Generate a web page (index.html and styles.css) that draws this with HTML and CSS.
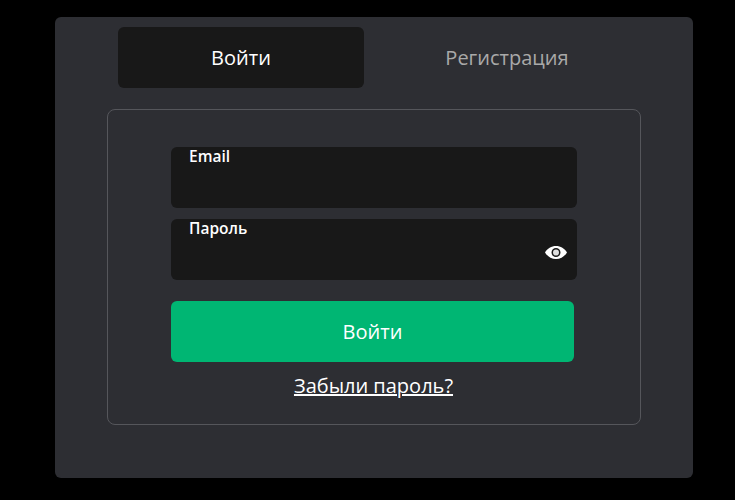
FILE: index.html
```html
<!DOCTYPE html>
<html lang="ru">
<head>
    <meta charset="UTF-8">
    <meta name="viewport" content="width=device-width, initial-scale=1.0">
    <title>Войти</title>
    <link rel="stylesheet" href="styles.css">
</head>
<body>
    <div class="modal">
        <div class="tabs">
            <button class="tab active">Войти</button>
            <button class="tab">Регистрация</button>
        </div>
        <form class="panel">
            <div class="field">
                <label>Email</label>
            </div>
            <div class="field">
                <label>Пароль</label>
                <svg class="eye" viewBox="0 0 22 13" width="22" height="13">
                    <path fill="#fff" fill-rule="evenodd" d="M0 6.500C2.400 2.600 6.400 0 11 0s8.600 2.600 11 6.500C19.600 10.400 15.600 13 11 13S2.400 10.400 0 6.500zM11 2a4.500 4.500 0 1 0 0 9 4.500 4.500 0 0 0 0-9z"/>
                    <circle fill="#ddd" cx="11" cy="6.500" r="3"/>
                </svg>
            </div>
            <button type="button" class="submit">Войти</button>
            <a href="#" class="forgot">Забыли пароль?</a>
        </form>
    </div>
</body>
</html>
```

FILE: styles.css
```css
body {
    margin: 0;
    height: 500px;
    overflow: hidden;
    background-color: #000;
    font-family: 'Open Sans', 'Noto Sans', sans-serif;
    color: #fff;
}
.modal {
    box-sizing: border-box;
    width: 638px;
    height: 461px;
    margin: 17px 0 0 55px;
    padding: 10px 52px 0;
    background-color: #2d2e33;
    border-radius: 6px;
}
.tabs {
    display: flex;
    gap: 20px;
    margin-left: 11px;
    margin-bottom: 21px;
}
.tab {
    width: 246px;
    height: 61px;
    border: 0;
    border-radius: 6px;
    background: none;
    color: #a9a9a9;
    font-family: inherit;
    font-size: 20px;
}
.tab.active {
    background-color: #181818;
    color: #fff;
}
.panel {
    box-sizing: border-box;
    display: flex;
    flex-direction: column;
    width: 534px;
    height: 316px;
    padding: 37px 63px 0;
    border: 1px solid #55565b;
    border-radius: 8px;
}
.field {
    position: relative;
    box-sizing: border-box;
    width: 406px;
    height: 61px;
    margin-bottom: 11px;
    padding: 0 18px;
    background-color: #181818;
    border-radius: 6px;
}
.field label {
    display: block;
    font-size: 15.5px;
    font-weight: 600;
    line-height: 20px;
    margin-top: -1px;
}
.eye {
    position: absolute;
    right: 10px;
    top: 27px;
}
.submit {
    width: 403px;
    height: 61px;
    margin-top: 10px;
    border: 0;
    border-radius: 6px;
    background-color: #00b673;
    color: #fff;
    font-family: inherit;
    font-size: 20px;
}
.forgot {
    width: 405px;
    margin-top: 10px;
    text-align: center;
    color: #fff;
    font-size: 20px;
    text-decoration-thickness: 2px;
}
```
